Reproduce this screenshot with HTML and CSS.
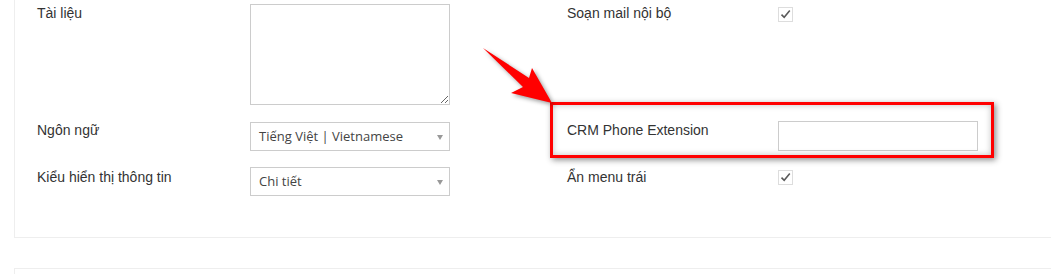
FILE: index.html
```html
<!DOCTYPE html>
<html lang="vi">
<head>
<meta charset="utf-8">
<title>Cài đặt</title>
<link rel="stylesheet" href="styles.css">
</head>
<body>
<div class="panel">
  <div class="form-grid">
    <div class="label r1">Tài liệu</div>
    <div class="ctrl r1"><textarea class="textarea"></textarea></div>
    <div class="label r1 rc">Soạn mail nội bộ</div>
    <div class="ctrl r1 rc"><span class="checkbox chk1"><svg viewBox="0 0 15 15" width="15" height="15"><path d="M3.5 7.6 L6.2 10.3 L11.8 3.6" fill="none" stroke="#5a5a5a" stroke-width="1.6"/></svg></span></div>

    <div class="label r2">Ngôn ngữ</div>
    <div class="ctrl r2"><div class="select sel1">Tiếng Việt | Vietnamese</div></div>
    <div class="label r2 rc">CRM Phone Extension</div>
    <div class="ctrl r2 rc"><input class="input" type="text"></div>

    <div class="label r3">Kiểu hiển thị thông tin</div>
    <div class="ctrl r3"><div class="select sel2">Chi tiết</div></div>
    <div class="label r3 rc">Ẩn menu trái</div>
    <div class="ctrl r3 rc"><span class="checkbox chk2"><svg viewBox="0 0 15 15" width="15" height="15"><path d="M3.5 7.6 L6.2 10.3 L11.8 3.6" fill="none" stroke="#5a5a5a" stroke-width="1.6"/></svg></span></div>
  </div>
</div>
<div class="panel panel2"></div>

<div class="highlight"></div>
<svg class="arrow" viewBox="470 30 100 90" width="100" height="90">
  <polygon points="483,48 529,78 532,68 552,103 511,93 523,87" fill="#ff0000"/>
</svg>
</body>
</html>
```
FILE: styles.css
```css
html, body {
  margin: 0;
  padding: 0;
  background: #fff;
  overflow: hidden;
}
body {
  font-family: "Liberation Sans", Arial, sans-serif;
  font-size: 14px;
  line-height: 20px;
  color: #333;
  position: relative;
  width: 1051px;
  height: 274px;
}
.panel {
  margin: -30px 0 0 14px;
  border: 1px solid #eeeeee;
  border-right: none;
  padding: 32px 0 41px 22px;
}
.panel2 {
  margin-top: 30px;
  height: 5px;
  padding: 0;
  border-bottom: none;
}
.form-grid {
  display: grid;
  grid-template-columns: 213px 200px 117px 211px 200px;
  grid-template-rows: 117px 47px auto;
  align-items: start;
}
.label { grid-column: 1; }
.ctrl { grid-column: 2; }
.label.rc { grid-column: 4; }
.ctrl.rc { grid-column: 5; }
.r1 { grid-row: 1; }
.r2 { grid-row: 2; }
.r3 { grid-row: 3; }

.textarea {
  display: block;
  box-sizing: border-box;
  width: 200px;
  height: 101px;
  margin: 1px 0 0;
  border: 1px solid #cccccc;
  border-radius: 0;
  padding: 6px;
  resize: vertical;
  font: inherit;
}
.select {
  box-sizing: border-box;
  position: relative;
  width: 200px;
  height: 29px;
  border: 1px solid #cccccc;
  padding: 0 8px;
  font-family: "Open Sans", sans-serif;
  font-size: 13px;
  line-height: 27px;
  color: #444;
  background: #fff;
}
.select::after {
  content: "";
  position: absolute;
  right: 6px;
  top: 12px;
  border-left: 3px solid transparent;
  border-right: 3px solid transparent;
  border-top: 5px solid #999;
}
.sel1 { margin-top: 2px; }
.sel2 { margin-top: 0; }
.input {
  display: block;
  box-sizing: border-box;
  width: 200px;
  height: 30px;
  margin: 1px 0 0;
  border: 1px solid #cccccc;
  border-radius: 0;
  padding: 0 8px;
  background: #fff;
  outline: none;
}
.checkbox {
  display: block;
  box-sizing: border-box;
  width: 15px;
  height: 15px;
  border: 1px solid #dddddd;
  background: #fff;
  position: relative;
}
.checkbox svg {
  position: absolute;
  left: -1px;
  top: -1px;
}
.chk1 { margin-top: 4px; }
.chk2 { margin-top: 3px; }

.highlight {
  position: absolute;
  left: 550px;
  top: 102px;
  width: 444px;
  height: 56px;
  box-sizing: border-box;
  border: 3px solid #ff0000;
  box-shadow: 2px 2px 6px rgba(0, 0, 0, 0.45), inset 0 0 6px rgba(0, 0, 0, 0.25);
  pointer-events: none;
}
.arrow {
  position: absolute;
  left: 470px;
  top: 30px;
  overflow: visible;
  filter: drop-shadow(2px 2px 2px rgba(0, 0, 0, 0.4));
}
```
